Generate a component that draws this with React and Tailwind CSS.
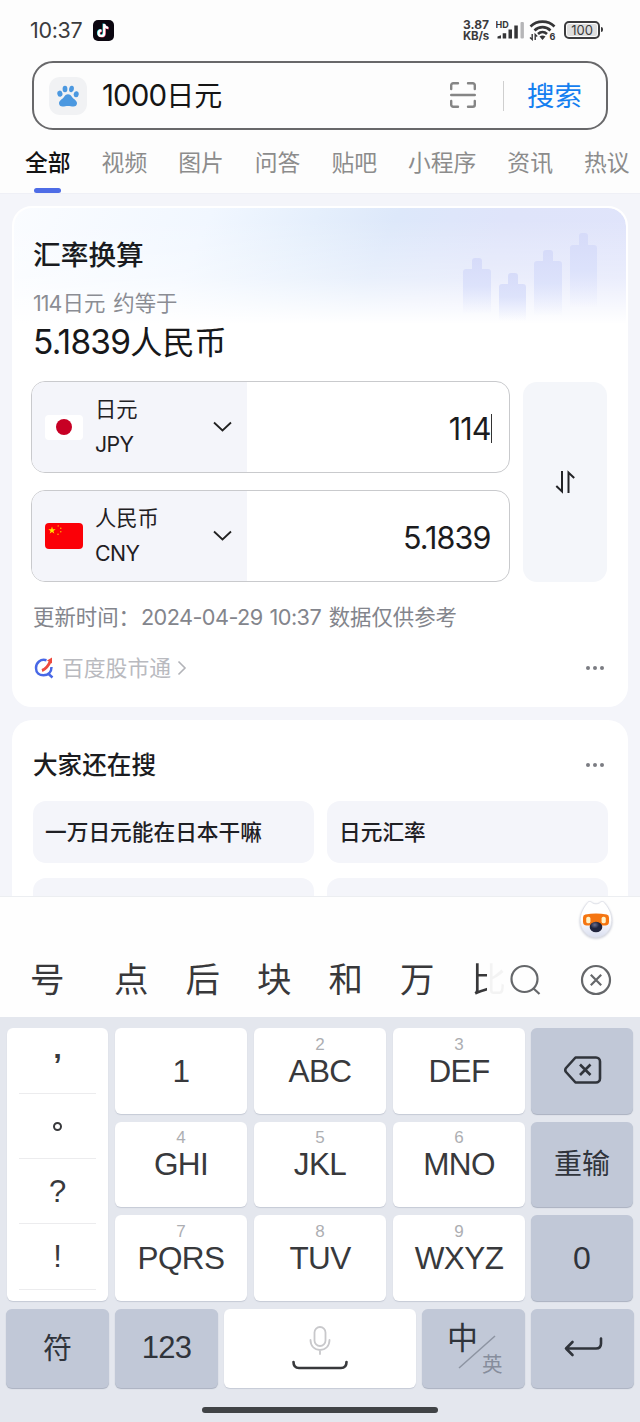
import React from 'react';
import { clsx } from 'clsx';

const tabs = ['全部', '视频', '图片', '问答', '贴吧', '小程序', '资讯', '热议'];

const candidates = ['点', '后', '块', '和', '万'];

const letterKeys = [
    { digit: '', label: '1' },
    { digit: '2', label: 'ABC' },
    { digit: '3', label: 'DEF' },
    { digit: '4', label: 'GHI' },
    { digit: '5', label: 'JKL' },
    { digit: '6', label: 'MNO' },
    { digit: '7', label: 'PQRS' },
    { digit: '8', label: 'TUV' },
    { digit: '9', label: 'WXYZ' }
];

const KEY = "rounded-[6px] flex items-center justify-center";
const LIGHT_KEY = "bg-white shadow-[0_1px_1px_#c5cad5]";
const DARK_KEY = "bg-[#c1c8d7] text-[#30343b] shadow-[0_1px_1px_#a9b0bf]";

function StatusBar() {
    return (
        <div className="h-[61px] pl-[30px] pr-[37px] flex items-center text-[#3b3b3d]">
            <span className="text-[21.5px] leading-none tracking-[-0.3px] w-[63px]">10:37</span>
            <svg width="21" height="21" viewBox="0 0 21 21" className="-mt-px">
                <rect width="21" height="21" rx="5" fill="#0b0610" />
                <g fill="none" strokeWidth="2.2">
                    <path d="M10.6 3.6v9.2a2.8 2.8 0 1 1-2.8-2.8M10.6 4c.3 2 1.8 3.3 4 3.5" stroke="#35d6dc" />
                    <path d="M11.8 4.4v9.2A2.8 2.8 0 1 1 9 10.8M11.8 4.8c.3 2 1.8 3.3 4 3.5" stroke="#e8476b" />
                    <path d="M11.2 4v9.2a2.8 2.8 0 1 1-2.8-2.8M11.2 4.4c.3 2 1.8 3.3 4 3.5" stroke="#fff" />
                </g>
            </svg>
            <div className="ml-auto w-[33px] text-[12px] leading-[11px] font-bold whitespace-nowrap -mt-px">
                3.87<br /><span className="text-[11.5px] tracking-[-0.2px]">KB/s</span>
            </div>
            <svg width="29" height="20" viewBox="0 0 29 20" fill="#353537" className="-mt-[2px]">
                <text x="-0.5" y="7.5" fontSize="9" fontWeight="700" fontFamily="Inter, sans-serif">HD</text>
                <path d="M1.5 18.5v-2l3.500-1.300v3.300zM6.700 18.500v-5.200h3.500v5.200zM12.500 18.500V9.500H16v9zM18.300 18.500V5.500h3.500v13z" />
                <rect x="24.500" y="2" width="3.400" height="16.500" rx="1" fill="#b5b5b7" />
            </svg>
            <svg width="27" height="21" viewBox="0 0 27 21" fill="none" stroke="#353537" strokeWidth="2.600" className="ml-[4px] -mt-px">
                <path d="M1.500 6.500C8 0 19 0 25.500 6.500M5.500 10.500c4.500-4.500 11.500-4.500 16 0M9 14c2.700-2.600 6.300-2.600 9 0" />
                <path d="M10.500 16.500q3-2 6 0L13.500 20z" fill="#353537" stroke="none" />
                <path d="M3.200 14v5.500L1 17.500M6.200 20v-5.500l2 2" strokeWidth="1.400" />
                <text x="20.500" y="20" fontSize="9" fontWeight="700" fontFamily="Inter, sans-serif" fill="#353537" stroke="none">6</text>
            </svg>
            <div className="ml-[8px] -mt-[2px] w-[36px] h-[18px] rounded-[5px] border-2 border-[#3b3b3d] p-px">
                <div className="bg-[#dedede] h-full rounded-[2px] text-[13px] leading-[12px] text-center">100</div>
            </div>
            <div className="w-[2px] h-[5px] ml-px -mt-[2px] bg-[#3b3b3d] rounded-r-full" />
        </div>
    );
}

function SearchBox() {
    return (
        <div className="mx-8 h-[69px] rounded-[21px] border-2 border-[#68686a] bg-[#fdfdfd] flex items-center pl-[15px] pr-[24px]">
            <div className="size-[38px] rounded-[11px] bg-[#f1f2f4] flex items-center justify-center">
                <svg width="22" height="22" viewBox="0 0 22 22" fill="#4b98e0">
                    <ellipse cx="2.9" cy="8.7" rx="2.6" ry="3.1" transform="rotate(-12 2.9 8.7)" />
                    <ellipse cx="8" cy="4" rx="2.4" ry="3.2" />
                    <ellipse cx="14.5" cy="4" rx="2.4" ry="3.2" transform="rotate(8 14.5 4)" />
                    <ellipse cx="19.2" cy="9.3" rx="2.5" ry="3" transform="rotate(10 19.2 9.3)" />
                    <path d="M11 9.300c2 0 3 1.200 4.200 2.900 1.600 2.100 4.800 3.200 4.800 6.100 0 2-1.500 3.300-3.500 3.300-2 0-3.500-.6-5.500-.6s-3.500.6-5.500.6-3.500-1.300-3.500-3.300c0-2.900 3.200-4 4.800-6.100C8 10.500 9 9.300 11 9.300z" />
                </svg>
            </div>
            <span className="ml-[15px] text-[29.5px] leading-none text-[#151515]">
                <span className="tracking-[-0.9px]">1000</span><span className="text-[28px]">日元</span>
            </span>
            <svg width="28" height="28" viewBox="0 0 28 28" fill="none" stroke="#858585" strokeWidth="2.4" strokeLinecap="round" className="ml-auto -mt-px -mr-px">
                <path d="M2.200 8V4.200a2 2 0 0 1 2-2H9M19 2.200h4.800a2 2 0 0 1 2 2V8M2.200 20v3.800a2 2 0 0 0 2 2H9M19 25.800h4.800a2 2 0 0 0 2-2V20M2.200 14h23.600" />
            </svg>
            <div className="w-[1.5px] h-[30px] bg-[#cfcfcf] ml-[27px]" />
            <button className="ml-[23px] mt-[2px] text-[27.5px] leading-none text-[#157ff0]">搜索</button>
        </div>
    );
}

function Tabs() {
    return (
        <div className="h-[64px] pt-[15px] pl-[25px] flex gap-[31px] whitespace-nowrap overflow-hidden border-b border-[#eff0f6]">
            {tabs.map((tab, i) => (
                <div key={tab} className={clsx("shrink-0 flex flex-col items-center text-[22.8px] leading-[36px]", i === 0 ? "text-[#141414] font-medium" : "text-[#8c8c8c]")}>
                    {tab}
                    {i === 0 && <div className="mt-[7px] w-[27px] h-[5px] rounded-full bg-[#4e6ce6]" />}
                </div>
            ))}
        </div>
    );
}

function Dots() {
    return (
        <div className="flex gap-[2.5px]">
            {[0, 1, 2].map(i => <span key={i} className="size-[4.5px] rounded-full bg-[#7b7c82]" />)}
        </div>
    );
}

function JapanFlag() {
    return (
        <div className="w-[38px] h-[25px] rounded-[4px] bg-white flex items-center justify-center">
            <div className="size-4 rounded-full bg-[#c70024]" />
        </div>
    );
}

function ChinaFlag() {
    return (
        <svg width="38" height="26" viewBox="0 0 38 26">
            <rect width="38" height="26" rx="4" fill="#fb0007" />
            <path d="M7 3.500l.9 2.700h2.800L8.400 7.900l.9 2.700L7 8.900l-2.300 1.700.9-2.700-2.300-1.700h2.800z" fill="#ffe600" />
            <g fill="#ffc800">
                <circle cx="13.2" cy="2.9" r=".7" />
                <circle cx="15.8" cy="5.2" r=".7" />
                <circle cx="15.8" cy="8.8" r=".7" />
                <circle cx="13" cy="11.3" r=".7" />
            </g>
        </svg>
    );
}

function CurrencyRow({ flag, name, code, value, caret }) {
    return (
        <div className="h-[92px] w-[479px] rounded-[14px] border border-[#c9cacd] overflow-hidden flex bg-white">
            <div className="w-[215px] bg-[#f4f5fa] flex items-center pl-[13px] pr-[15px]">
                {flag}
                <div className="ml-[12px] text-[21.3px] leading-[35px] text-[#1f2023]">
                    <div>{name}</div>
                    <div className="tracking-[-0.6px]">{code}</div>
                </div>
                <svg width="19" height="12" viewBox="0 0 19 12" fill="none" stroke="#222" strokeWidth="1.8" className="ml-auto">
                    <path d="M1 1.500l8.500 8 8.500-8" />
                </svg>
            </div>
            <div className="flex-1 flex items-center justify-end pr-[17px] text-[30.5px] text-[#1c1c1e] tracking-[-0.9px] pt-[3px]">
                {value}
                <span className={clsx("w-[1.5px] h-[29px]", caret && "bg-[#333]")} />
            </div>
        </div>
    );
}

function ExchangeCard() {
    return (
        <section className="relative h-[501px] rounded-[20px] bg-white overflow-hidden border-2 border-white px-[19px]">
            {/* tinted banner behind the heading */}
            <div className="absolute inset-x-0 top-0 h-[116px] rounded-t-[18px] bg-[linear-gradient(to_bottom,transparent_10%,rgba(255,255,255,0.35)_60%,white),linear-gradient(115deg,#fafcff_0%,#f1f7ff_30%,#e5effc_46%,#dde8fa_58%,#dfe4fa_75%,#e0e4fb_100%)]">
                <svg width="142" height="100" viewBox="0 0 142 100" className="absolute right-[22px] top-[20px]">
                    <defs>
                        <linearGradient id="bar" x1="0" y1="0" x2="0" y2="1">
                            <stop offset="0" stopColor="#d6dbf9" />
                            <stop offset="0.5" stopColor="#dbe1fb" stopOpacity="0.9" />
                            <stop offset="1" stopColor="#e2e7fd" stopOpacity="0" />
                        </linearGradient>
                    </defs>
                    <g fill="url(#bar)">
                        <path d="M4 41h6v-8q0-3 3-3h4q3 0 3 3v8h6q3 0 3 3v42H1V44q0-3 3-3z" />
                        <path d="M40 56h6v-8q0-3 3-3h4q3 0 3 3v8h5q3 0 3 3v34H37V59q0-3 3-3z" />
                        <path d="M75 33h6v-8q0-3 3-3h4q3 0 3 3v8h6q3 0 3 3v52H72V36q0-3 3-3z" />
                        <path d="M111 17h6V8q0-3 3-3h3q3 0 3 3v9h6q3 0 3 3v60h-27V20q0-3 3-3z" />
                    </g>
                </svg>
            </div>
            <div className="relative">
                <h2 className="pt-[30px] text-[27.7px] leading-[34px] font-medium text-[#191b20]">汇率换算</h2>
                <p className="mt-[17px] text-[21.4px] leading-[28px] text-[#8b8d94] [word-spacing:2px]"><span className="mr-px tracking-[-0.9px]">114</span>日元 约等于</p>
                <p className="mt-[4px] h-[42px] text-[32.2px] leading-[42px] text-[#17181a]"><span className="text-[33.5px] tracking-[-0.8px]">5.1839</span>人民币</p>
                <div className="mt-[18px] -ml-[2px] flex gap-[13px]">
                    <div className="flex flex-col gap-[17px]">
                        <CurrencyRow flag={<JapanFlag />} name="日元" code="JPY" value="114" caret />
                        <CurrencyRow flag={<ChinaFlag />} name="人民币" code="CNY" value="5.1839" />
                    </div>
                    <div className="mt-px w-[86px] rounded-[14px] bg-[#f4f6fa] flex items-center justify-center">
                        <svg width="22" height="24" viewBox="0 0 22 24" fill="none" stroke="#222326" strokeWidth="2">
                            <path d="M8 1v20.500L2.300 16M14.500 23V2.500L20.200 8" />
                        </svg>
                    </div>
                </div>
                <p className="mt-[20px] text-[21.4px] leading-[30px] text-[#83858c] [word-spacing:1.5px] whitespace-nowrap">更新时间：<span className="ml-px text-[21.7px] tracking-[-0.58px]">2024-04-29 10:37</span> 数据仅供参考</p>
                <div className="mt-[21px] flex items-center pr-[3px]">
                    <svg width="22" height="22" viewBox="0 0 22 22" fill="none" strokeWidth="2.5">
                        <path d="M13.500 3.200C7.500 1.500 3 5.500 3 11c0 4.800 3.500 7.300 7.500 7.300 4.500 0 8-3 8-8.300" stroke="#4868e6" />
                        <path d="M15 16.500l4.500 4" stroke="#4868e6" />
                        <path d="M9 13.500c4.500-1.500 6.500-5 8.500-9.500" stroke="#ee4a3e" strokeWidth="3" />
                        <path d="M14 3.500L19 .5v6z" fill="#ee4a3e" />
                    </svg>
                    <span className="ml-[7px] text-[21.8px] leading-[30px] text-[#b9babf]">百度股市通</span>
                    <svg width="10" height="16" viewBox="0 0 10 16" fill="none" stroke="#b2b3b8" strokeWidth="1.6" className="ml-[6px]">
                        <path d="M1.500 1.500L8 8l-6.500 6.500" />
                    </svg>
                    <div className="ml-auto"><Dots /></div>
                </div>
            </div>
        </section>
    );
}

function RelatedCard() {
    return (
        <section className="mt-[13px] rounded-t-[20px] bg-white pl-[21px] pr-[20px] pt-[28px]">
            <div className="flex items-center justify-between pr-1">
                <h2 className="text-[24.6px] leading-[34px] font-medium text-[#1b1c20]">大家还在搜</h2>
                <Dots />
            </div>
            <div className="mt-[19px] grid grid-cols-2 gap-x-[13px] gap-y-[15px] text-[21.7px] font-medium text-[#1f2024]">
                <div className="h-[62px] rounded-[13px] bg-[#f4f5fa] flex items-center pl-3">一万日元能在日本干嘛</div>
                <div className="h-[62px] rounded-[13px] bg-[#f4f5fa] flex items-center pl-3">日元汇率</div>
                <div className="h-[62px] rounded-[13px] bg-[#f4f5fa]" />
                <div className="h-[62px] rounded-[13px] bg-[#f4f5fa]" />
            </div>
        </section>
    );
}

function CandidateBar() {
    return (
        <div className="h-[121px] bg-[#fefefe] border-t border-[#eceef1]">
            <div className="h-[47px] pt-[3px] pr-[25px] flex justify-end">
                <svg width="38" height="40" viewBox="0 0 38 43" className="drop-shadow-[0_1px_1px_#c8cbd6]">
                    <defs>
                        <linearGradient id="face" x1="0" y1="0" x2="0" y2="1">
                            <stop offset="0.5" stopColor="#fff" />
                            <stop offset="1" stopColor="#d9def0" />
                        </linearGradient>
                        <radialGradient id="nose" cx=".4" cy=".3">
                            <stop offset="0" stopColor="#6b7090" />
                            <stop offset="0.7" stopColor="#20243d" />
                        </radialGradient>
                    </defs>
                    <path d="M9 4c2-3 4-3 6-1 2.500 1.500 5.500 1.500 8 0 2-2 4-2 6 1 4 5 7 11 7 18C36 32 29 40 19 40S2 32 2 22C2 15 5 9 9 4z" fill="url(#face)" stroke="#dfe1e8" />
                    <path d="M7.500 15.500q11.500-2 23 0 2.500.5 2.500 3.500v4q0 4-4 4.500h-20q-4-.5-4-4.500v-4q0-3 2.500-3.500z" fill="#f57511" />
                    <rect x="8.5" y="18" width="4.500" height="7" rx="2" fill="#fff3c9" />
                    <rect x="25" y="18" width="4.500" height="7" rx="2" fill="#fff3c9" />
                    <ellipse cx="19" cy="29" rx="6.800" ry="5.600" fill="url(#nose)" />
                </svg>
            </div>
            <div className="h-[70px] pt-px flex items-center pl-[30px] text-[34.5px] text-[#38383a]">
                <span className="w-[84px]">号</span>
                {candidates.map(c => <span key={c} className="w-[71.5px]">{c}</span>)}
                <span className="w-[35px] text-transparent bg-clip-text bg-[linear-gradient(to_right,#38383a_44%,#f3f3f3_44%)]">比</span>
                <svg width="32" height="32" viewBox="0 0 32 32" fill="none" stroke="#65676a" strokeWidth="2.2" className="ml-[3px]">
                    <circle cx="14.500" cy="15" r="13" />
                    <path d="M23.500 24.500l6 5.500" />
                </svg>
                <svg width="32" height="32" viewBox="0 0 32 32" fill="none" stroke="#65676a" strokeWidth="2.2" className="ml-[38px]">
                    <circle cx="16" cy="16" r="14" />
                    <path d="M10.800 10.800l10.400 10.400M21.200 10.800L10.800 21.200" />
                </svg>
            </div>
        </div>
    );
}

function Keyboard() {
    return (
        <div className="h-[405px] bg-[#e4e7ee] pt-[11px] px-[7px] text-[#38393c] font-['Liberation_Sans','Noto_Sans_CJK_SC',sans-serif]">
            <div className="flex gap-[7px] h-[273px]">
                <div className={clsx("w-[101px] rounded-[6px] px-3 text-[31px]", LIGHT_KEY)}>
                    <div className="h-[66px] border-b border-[#ececee] text-center leading-[76px] font-bold">’</div>
                    <div className="h-[65px] border-b border-[#ececee] flex items-center justify-center">
                        <span className="size-[9px] rounded-full border-2 border-[#38393c]" />
                    </div>
                    <div className="h-[65px] border-b border-[#ececee] text-center leading-[66px]">?</div>
                    <div className="h-[66px] border-b border-[#ececee] text-center leading-[66px]">!</div>
                </div>
                <div className="grid grid-cols-3 grid-rows-3 gap-x-[7px] gap-y-[8px] w-[410px]">
                    {letterKeys.map(({ digit, label }) => (
                        <div key={label} className={clsx("flex-col", KEY, LIGHT_KEY)}>
                            {digit && <span className="text-[17px] leading-[18px] text-[#adaeb2]">{digit}</span>}
                            <span className={clsx("text-[31.5px] leading-[34px] tracking-[-0.6px]", digit && "mb-[18px]")}>{label}</span>
                        </div>
                    ))}
                </div>
                <div className="-ml-px w-[102px] grid grid-rows-3 gap-y-[8px]">
                    <div className={clsx(KEY, DARK_KEY)}>
                        <svg width="39" height="30" viewBox="0 0 39 30" fill="none" stroke="#30343b" strokeWidth="2.6" className="-mt-[2px]">
                            <path d="M12.500 2.500H33a4 4 0 0 1 4 4v17a4 4 0 0 1-4 4H12.500L3 17q-1.500-2 0-4z" strokeLinejoin="round" />
                            <path d="M17 9.500l10.500 10.500M27.500 9.500L17 20" />
                        </svg>
                    </div>
                    <div className={clsx("text-[28px] leading-none pt-px", KEY, DARK_KEY)}>重输</div>
                    <div className={clsx("text-[32px] leading-none", KEY, DARK_KEY)}>0</div>
                </div>
            </div>
            <div className="mt-[8px] -mx-px h-[79px] flex gap-[6px]">
                <div className={clsx("w-[103px] text-[29px] leading-none pt-[2px]", KEY, DARK_KEY)}>符</div>
                <div className={clsx("w-[103px] text-[31px] tracking-[-0.8px]", KEY, DARK_KEY)}>123</div>
                <div className={clsx("w-[192px]", KEY, LIGHT_KEY)}>
                    <svg width="56" height="46" viewBox="0 0 56 46" fill="none" strokeLinecap="round" className="-mt-[2px]">
                        <g stroke="#c8c8cb" strokeWidth="1.8">
                            <rect x="22.500" y="2" width="11" height="19" rx="5.500" />
                            <path d="M18.500 15c0 6 4 10 9.500 10s9.500-4 9.500-10M28 25v4" />
                        </g>
                        <path d="M1.500 37q0 6 5.500 6h42q5.500 0 5.500-6" stroke="#38393c" strokeWidth="2.6" />
                    </svg>
                </div>
                <div className={clsx("w-[103px] relative", KEY, DARK_KEY)}>
                    <span className="absolute left-[25px] top-[13px] text-[31px] leading-[34px]">中</span>
                    <svg width="38" height="34" viewBox="0 0 38 34" stroke="#8d94a2" strokeWidth="1.5" className="mt-[7px] ml-[6px]">
                        <path d="M1 33L37 1" />
                    </svg>
                    <span className="absolute left-[60px] top-[44px] text-[20.5px] leading-[24px] text-[#868d9c]">英</span>
                </div>
                <div className={clsx("w-[103px]", KEY, DARK_KEY)}>
                    <svg width="40" height="22" viewBox="0 0 40 22" fill="none" stroke="#30343b" strokeWidth="2.6" strokeLinecap="round" strokeLinejoin="round" className="-mt-[3px]">
                        <path d="M9.500 6L3 12.500 9.500 19M3 12.500h30q5 0 5-5V2.500" />
                    </svg>
                </div>
            </div>
            <div className="mx-auto mt-[19px] w-[236px] h-[6px] rounded-full bg-[#404346]" />
        </div>
    );
}

export default function App() {
    return (
        <div className="w-[640px] h-[1422px] overflow-hidden flex flex-col bg-[#f4f5fa] font-['Inter','Noto_Sans_CJK_SC',sans-serif]">
            <header className="bg-[#fdfdfd]">
                <StatusBar />
                <SearchBox />
                <Tabs />
            </header>
            <main className="h-[702px] overflow-hidden px-3 pt-[12px]">
                <ExchangeCard />
                <RelatedCard />
            </main>
            <CandidateBar />
            <Keyboard />
        </div>
    );
}
